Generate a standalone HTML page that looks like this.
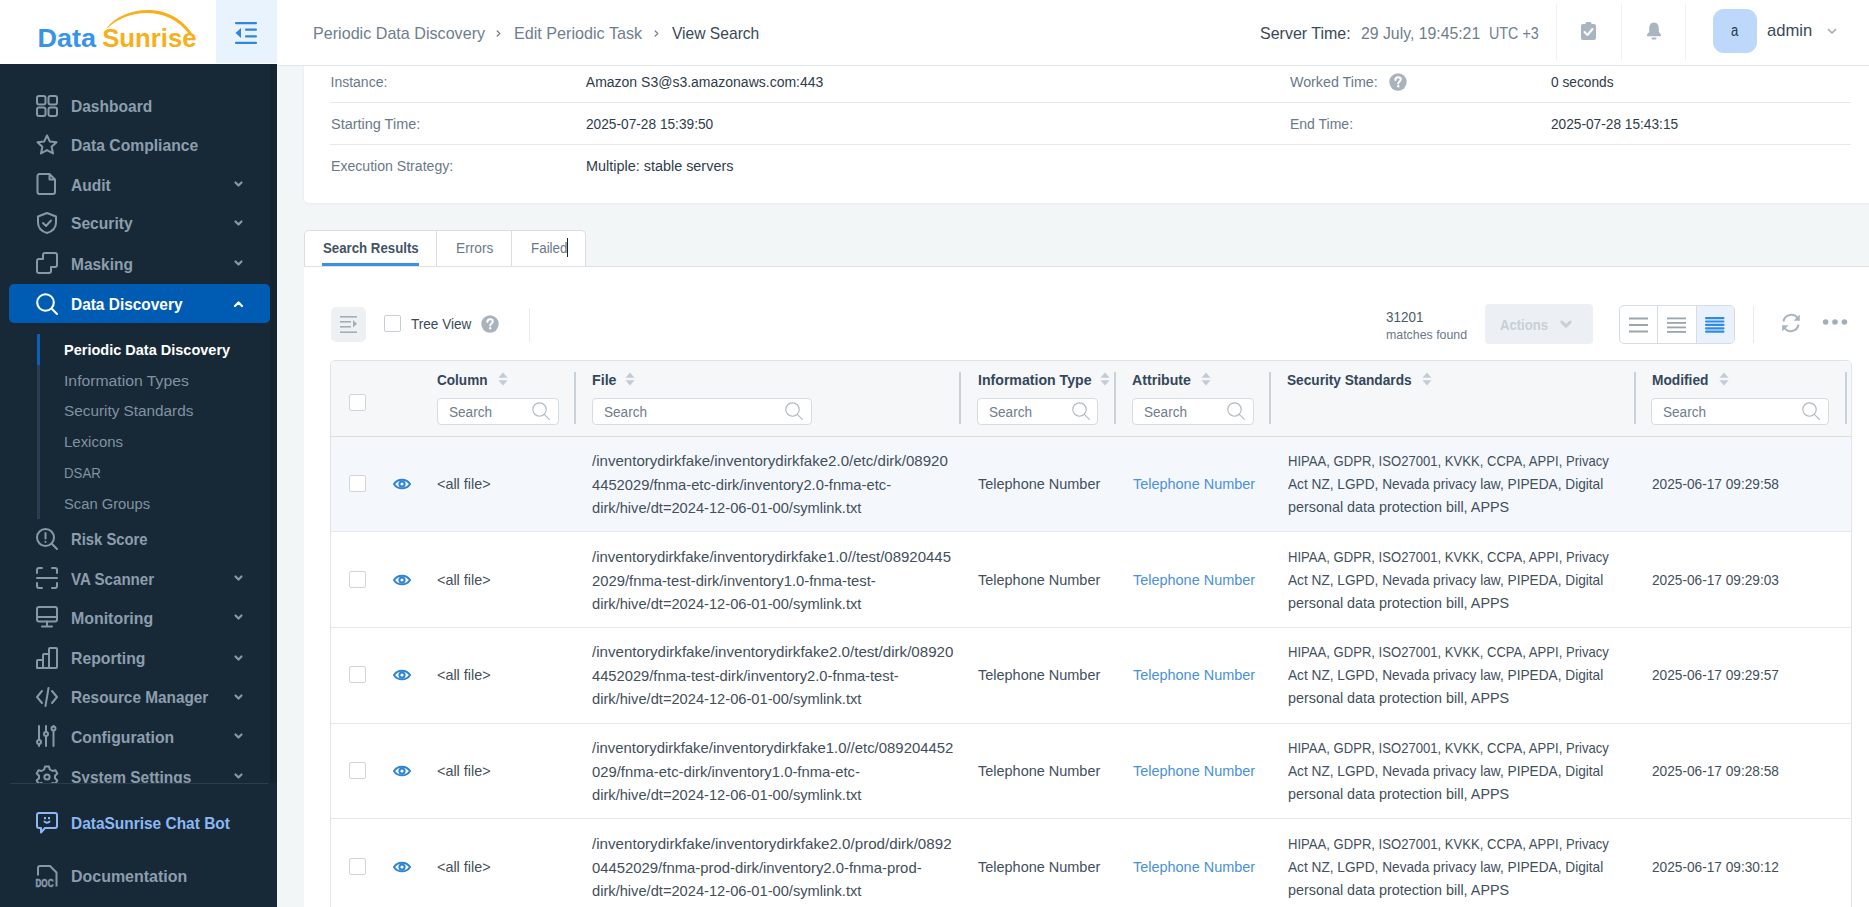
<!DOCTYPE html><html><head><meta charset="utf-8"><style>
html,body{margin:0;padding:0}
body{width:1869px;height:907px;overflow:hidden;position:relative;background:#f3f6f7;font-family:"Liberation Sans",sans-serif}
.t{position:absolute;white-space:nowrap;transform-origin:0 0}
svg{overflow:visible}
</style></head><body>
<div style="position:absolute;left:304px;top:266px;width:1600px;height:700px;background:#fff;"></div>
<div style="position:absolute;left:304px;top:-10px;width:1600px;height:213px;background:#fff;border-radius:5px;box-shadow:0 1px 3px rgba(20,40,60,0.06);"></div>
<div style="position:absolute;left:0px;top:0px;width:277px;height:907px;background:#172937;"></div>
<div style="position:absolute;left:0px;top:0px;width:277px;height:64px;background:#fff;"></div>
<div style="position:absolute;left:216px;top:0px;width:61px;height:63px;background:#e8f3fd;"></div>
<svg style="position:absolute;left:30px;top:6px;" width="175" height="46" viewBox="0 0 175 46"><path d="M77 21.5 C94 0 140 -6 162 27.5 L159.5 28.8 C137 -2 97 4 77.6 21.9 Z" fill="#f7b01b"/><text x="7.6" y="40.6" font-family="Liberation Sans" font-weight="700" font-size="26" fill="#3794e8" textLength="58.5" lengthAdjust="spacingAndGlyphs">Data</text><text x="72.2" y="40.6" font-family="Liberation Sans" font-weight="700" font-size="26" fill="#f7b01b" textLength="94.5" lengthAdjust="spacingAndGlyphs">Sunrise</text></svg>
<svg style="position:absolute;left:234px;top:21px;" width="24" height="24" viewBox="0 0 24 24"><g fill="#2f86dd"><rect x="1" y="1" width="22" height="2.2" rx="1"/><rect x="11" y="7.6" width="12" height="2.2" rx="1"/><rect x="11" y="14.2" width="12" height="2.2" rx="1"/><rect x="1" y="20.8" width="22" height="2.2" rx="1"/><path d="M7 7 L7 17 L1.5 12 Z"/></g></svg>
<div style="position:absolute;left:9px;top:284px;width:261px;height:39px;background:#005cb3;border-radius:5px;"></div>
<svg style="position:absolute;left:36px;top:95px;" width="22" height="22" viewBox="0 0 22 22"><g fill="none" stroke="#8898a6" stroke-width="2" stroke-linecap="round" stroke-linejoin="round"><rect x="1" y="1" width="8.5" height="8.5" rx="2"/><rect x="12.5" y="1" width="8.5" height="8.5" rx="2"/><rect x="1" y="12.5" width="8.5" height="8.5" rx="2"/><rect x="12.5" y="12.5" width="8.5" height="8.5" rx="2"/></g></svg>
<div class="t" style="left:71px;top:98px;font-size:16.5px;line-height:16.5px;font-weight:700;color:#8c9ead;transform:scaleX(0.9422);">Dashboard</div>
<svg style="position:absolute;left:36px;top:134px;" width="22" height="22" viewBox="0 0 22 22"><path fill="none" stroke="#8898a6" stroke-width="2" stroke-linecap="round" stroke-linejoin="round" d="M11 1.5 L13.9 7.6 L20.5 8.3 L15.6 12.8 L17 19.4 L11 16.1 L5 19.4 L6.4 12.8 L1.5 8.3 L8.1 7.6 Z"/></svg>
<div class="t" style="left:71px;top:137.2px;font-size:16.5px;line-height:16.5px;font-weight:700;color:#8c9ead;transform:scaleX(0.9502);">Data Compliance</div>
<svg style="position:absolute;left:36px;top:173px;" width="22" height="22" viewBox="0 0 22 22"><path fill="none" stroke="#8898a6" stroke-width="2" stroke-linecap="round" stroke-linejoin="round" d="M3.5 1 H13.5 L19 6.5 V19 A2 2 0 0 1 17 21 H3.5 A2 2 0 0 1 1.5 19 V3 A2 2 0 0 1 3.5 1 Z M13.5 1 V6.5 H19"/></svg>
<div class="t" style="left:71px;top:176.5px;font-size:16.5px;line-height:16.5px;font-weight:700;color:#8c9ead;transform:scaleX(0.9418);">Audit</div>
<svg style="position:absolute;left:234px;top:181.2px;" width="9" height="6" viewBox="0 0 9 6"><path d="M1.5 1.5 L4.5 4.5 L7.5 1.5" fill="none" stroke="#8898a6" stroke-width="2.2" stroke-linecap="round" stroke-linejoin="round"/></svg>
<svg style="position:absolute;left:36px;top:212px;" width="22" height="22" viewBox="0 0 22 22"><g fill="none" stroke="#8898a6" stroke-width="2" stroke-linecap="round" stroke-linejoin="round"><path d="M11 1 L20 4.5 V10.5 C20 16 16 19.5 11 21 C6 19.5 2 16 2 10.5 V4.5 Z"/><path d="M7 11 L10 14 L15 8.5"/></g></svg>
<div class="t" style="left:71px;top:215.3px;font-size:16.5px;line-height:16.5px;font-weight:700;color:#8c9ead;transform:scaleX(0.9476);">Security</div>
<svg style="position:absolute;left:234px;top:220.0px;" width="9" height="6" viewBox="0 0 9 6"><path d="M1.5 1.5 L4.5 4.5 L7.5 1.5" fill="none" stroke="#8898a6" stroke-width="2.2" stroke-linecap="round" stroke-linejoin="round"/></svg>
<svg style="position:absolute;left:36px;top:252px;" width="22" height="22" viewBox="0 0 22 22"><path fill="none" stroke="#8898a6" stroke-width="2" stroke-linecap="round" stroke-linejoin="round" d="M1 9 A2 2 0 0 1 3 7 H7 V3 A2 2 0 0 1 9 1 H19 A2 2 0 0 1 21 3 V13 A2 2 0 0 1 19 15 H15 V19 A2 2 0 0 1 13 21 H3 A2 2 0 0 1 1 19 Z"/></svg>
<div class="t" style="left:71px;top:255.5px;font-size:16.5px;line-height:16.5px;font-weight:700;color:#8c9ead;transform:scaleX(0.9376);">Masking</div>
<svg style="position:absolute;left:234px;top:260.2px;" width="9" height="6" viewBox="0 0 9 6"><path d="M1.5 1.5 L4.5 4.5 L7.5 1.5" fill="none" stroke="#8898a6" stroke-width="2.2" stroke-linecap="round" stroke-linejoin="round"/></svg>
<svg style="position:absolute;left:36px;top:528px;" width="22" height="22" viewBox="0 0 22 22"><g fill="none" stroke="#8898a6" stroke-width="2" stroke-linecap="round" stroke-linejoin="round"><circle cx="9.5" cy="9.5" r="8.5"/><path d="M15.8 15.8 L21 21"/><path d="M9.5 5 V10.5"/><path d="M9.5 13.8 V14"/></g></svg>
<div class="t" style="left:71px;top:531.1px;font-size:16.5px;line-height:16.5px;font-weight:700;color:#8c9ead;transform:scaleX(0.8981);">Risk Score</div>
<svg style="position:absolute;left:36px;top:567px;" width="22" height="22" viewBox="0 0 22 22"><g fill="none" stroke="#8898a6" stroke-width="2" stroke-linecap="round" stroke-linejoin="round"><path d="M1 6 V3 A2 2 0 0 1 3 1 H6 M16 1 H19 A2 2 0 0 1 21 3 V6 M21 16 V19 A2 2 0 0 1 19 21 H16 M6 21 H3 A2 2 0 0 1 1 19 V16"/><path d="M1 11 H21"/></g></svg>
<div class="t" style="left:71px;top:570.5px;font-size:16.5px;line-height:16.5px;font-weight:700;color:#8c9ead;transform:scaleX(0.9158);">VA Scanner</div>
<svg style="position:absolute;left:234px;top:575.2px;" width="9" height="6" viewBox="0 0 9 6"><path d="M1.5 1.5 L4.5 4.5 L7.5 1.5" fill="none" stroke="#8898a6" stroke-width="2.2" stroke-linecap="round" stroke-linejoin="round"/></svg>
<svg style="position:absolute;left:36px;top:606px;" width="22" height="22" viewBox="0 0 22 22"><g fill="none" stroke="#8898a6" stroke-width="2" stroke-linecap="round" stroke-linejoin="round"><rect x="1" y="1" width="20" height="14.5" rx="2"/><path d="M1 11 H21 M11 15.5 V20.5 M6 20.5 H16"/></g></svg>
<div class="t" style="left:71px;top:609.7px;font-size:16.5px;line-height:16.5px;font-weight:700;color:#8c9ead;transform:scaleX(0.9645);">Monitoring</div>
<svg style="position:absolute;left:234px;top:614.4000000000001px;" width="9" height="6" viewBox="0 0 9 6"><path d="M1.5 1.5 L4.5 4.5 L7.5 1.5" fill="none" stroke="#8898a6" stroke-width="2.2" stroke-linecap="round" stroke-linejoin="round"/></svg>
<svg style="position:absolute;left:36px;top:647px;" width="22" height="22" viewBox="0 0 22 22"><g fill="none" stroke="#8898a6" stroke-width="2" stroke-linecap="round" stroke-linejoin="round"><path d="M1 21 V14 A1 1 0 0 1 2 13 H7 V21 Z M7 21 V8 A1 1 0 0 1 8 7 H13 V21 Z M13 21 V2 A1 1 0 0 1 14 1 H20 A1 1 0 0 1 21 2 V20 A1 1 0 0 1 20 21 Z"/></g></svg>
<div class="t" style="left:71px;top:649.9px;font-size:16.5px;line-height:16.5px;font-weight:700;color:#8c9ead;transform:scaleX(0.9563);">Reporting</div>
<svg style="position:absolute;left:234px;top:654.6px;" width="9" height="6" viewBox="0 0 9 6"><path d="M1.5 1.5 L4.5 4.5 L7.5 1.5" fill="none" stroke="#8898a6" stroke-width="2.2" stroke-linecap="round" stroke-linejoin="round"/></svg>
<svg style="position:absolute;left:36px;top:686px;" width="22" height="22" viewBox="0 0 22 22"><g fill="none" stroke="#8898a6" stroke-width="2" stroke-linecap="round" stroke-linejoin="round"><path d="M6 5 L1 11 L6 17 M16 5 L21 11 L16 17 M12.5 2 L9.5 20"/></g></svg>
<div class="t" style="left:71px;top:688.9px;font-size:16.5px;line-height:16.5px;font-weight:700;color:#8c9ead;transform:scaleX(0.9300);">Resource Manager</div>
<svg style="position:absolute;left:234px;top:693.6px;" width="9" height="6" viewBox="0 0 9 6"><path d="M1.5 1.5 L4.5 4.5 L7.5 1.5" fill="none" stroke="#8898a6" stroke-width="2.2" stroke-linecap="round" stroke-linejoin="round"/></svg>
<svg style="position:absolute;left:36px;top:725px;" width="22" height="22" viewBox="0 0 22 22"><g fill="none" stroke="#8898a6" stroke-width="2" stroke-linecap="round" stroke-linejoin="round"><path d="M3 1 V15 M3 19 V21 M10 1 V7 M10 11 V21 M17.5 1 V1.5 M17.5 5.5 V21"/><circle cx="3" cy="17" r="2"/><circle cx="10" cy="9" r="2"/><circle cx="17.5" cy="3.5" r="2"/></g></svg>
<div class="t" style="left:71px;top:728.7px;font-size:16.5px;line-height:16.5px;font-weight:700;color:#8c9ead;transform:scaleX(0.9543);">Configuration</div>
<svg style="position:absolute;left:234px;top:733.4000000000001px;" width="9" height="6" viewBox="0 0 9 6"><path d="M1.5 1.5 L4.5 4.5 L7.5 1.5" fill="none" stroke="#8898a6" stroke-width="2.2" stroke-linecap="round" stroke-linejoin="round"/></svg>
<svg style="position:absolute;left:36px;top:765px;" width="22" height="22" viewBox="0 0 22 22"><g fill="none" stroke="#8898a6" stroke-width="2" stroke-linecap="round" stroke-linejoin="round"><path d="M9 1.5 H13 L13.8 4.5 L16.5 6 L19.5 5.2 L21.3 8.5 L19 10.8 V13.2 L21.3 15.5 L19.5 18.8 L16.5 18 L13.8 19.5 L13 22.5 H9 L8.2 19.5 L5.5 18 L2.5 18.8 L0.7 15.5 L3 13.2 V10.8 L0.7 8.5 L2.5 5.2 L5.5 6 L8.2 4.5 Z"/><circle cx="11" cy="12" r="2.6"/></g></svg>
<div class="t" style="left:71px;top:768.5px;font-size:16.5px;line-height:16.5px;font-weight:700;color:#8c9ead;transform:scaleX(0.9371);">System Settings</div>
<svg style="position:absolute;left:234px;top:773.2px;" width="9" height="6" viewBox="0 0 9 6"><path d="M1.5 1.5 L4.5 4.5 L7.5 1.5" fill="none" stroke="#8898a6" stroke-width="2.2" stroke-linecap="round" stroke-linejoin="round"/></svg>
<svg style="position:absolute;left:36px;top:293px;" width="22" height="22" viewBox="0 0 22 22"><g fill="none" stroke="#fff" stroke-width="2.1" stroke-linecap="round"><circle cx="9.5" cy="9.5" r="8.3"/><path d="M15.6 15.6 L21 21"/></g></svg>
<div class="t" style="left:71px;top:296px;font-size:16.5px;line-height:16.5px;font-weight:700;color:#fff;transform:scaleX(0.9352);">Data Discovery</div>
<svg style="position:absolute;left:234px;top:300.7px;" width="9" height="6" viewBox="0 0 9 6"><path d="M1 5 L4.5 1.5 L8 5" fill="none" stroke="#fff" stroke-width="2.2" stroke-linecap="round" stroke-linejoin="round"/></svg>
<div style="position:absolute;left:37px;top:334px;width:2.5px;height:185px;background:#2a3d52;"></div>
<div style="position:absolute;left:37px;top:334px;width:2.5px;height:31px;background:#0a60bb;"></div>
<div class="t" style="left:64.2px;top:342px;font-size:15.5px;line-height:15.5px;font-weight:700;color:#ffffff;transform:scaleX(0.9359);">Periodic Data Discovery</div>
<div class="t" style="left:64.2px;top:373.4px;font-size:15.5px;line-height:15.5px;font-weight:400;color:#8192a1;transform:scaleX(1.0154);">Information Types</div>
<div class="t" style="left:64.2px;top:403.2px;font-size:15.5px;line-height:15.5px;font-weight:400;color:#8192a1;transform:scaleX(0.9881);">Security Standards</div>
<div class="t" style="left:64.2px;top:434px;font-size:15.5px;line-height:15.5px;font-weight:400;color:#8192a1;transform:scaleX(0.9644);">Lexicons</div>
<div class="t" style="left:64.2px;top:464.8px;font-size:15.5px;line-height:15.5px;font-weight:400;color:#8192a1;transform:scaleX(0.8545);">DSAR</div>
<div class="t" style="left:64.2px;top:495.6px;font-size:15.5px;line-height:15.5px;font-weight:400;color:#8192a1;transform:scaleX(0.9506);">Scan Groups</div>
<div style="position:absolute;left:0px;top:783px;width:277px;height:124px;background:#172937;"></div>
<div style="position:absolute;left:10px;top:783px;width:258px;height:1px;background:#2d3d4e;"></div>
<svg style="position:absolute;left:36px;top:812px;" width="22" height="22" viewBox="0 0 22 22"><g fill="none" stroke="#8cb7f4" stroke-width="2" stroke-linejoin="round" stroke-linecap="round"><path d="M3 1 H19 A2 2 0 0 1 21 3 V14 A2 2 0 0 1 19 16 H9 L5 20.5 V16 H3 A2 2 0 0 1 1 14 V3 A2 2 0 0 1 3 1 Z"/><path d="M8.5 9.5 C9.5 11 12.5 11 13.5 9.5"/></g><g fill="#8cb7f4"><rect x="8" y="5" width="2" height="2.2"/><rect x="12" y="5" width="2" height="2.2"/></g></svg>
<div class="t" style="left:71px;top:814.9px;font-size:16.5px;line-height:16.5px;font-weight:700;color:#8cb7f4;transform:scaleX(0.9369);">DataSunrise Chat Bot</div>
<svg style="position:absolute;left:36px;top:865px;" width="22" height="22" viewBox="0 0 22 22"><path fill="none" stroke="#8898a6" stroke-width="2" stroke-linejoin="round" d="M2 10.5 V3 A2 2 0 0 1 4 1 H14 L20.5 7.5 V21.5"/><text x="-0.5" y="21.5" font-family="Liberation Sans" font-weight="700" font-size="10" fill="#8898a6" stroke="#8898a6" stroke-width="0.5" textLength="18" lengthAdjust="spacingAndGlyphs">DOC</text></svg>
<div class="t" style="left:71px;top:867.9px;font-size:16.5px;line-height:16.5px;font-weight:700;color:#8c9ead;transform:scaleX(0.9677);">Documentation</div>
<div style="position:absolute;left:270px;top:64px;width:7px;height:719px;background:#15252f;"></div>
<div style="position:absolute;left:277px;top:0px;width:1592px;height:65px;background:#fff;"></div>
<div style="position:absolute;left:277px;top:65px;width:1592px;height:1px;background:#e2e6ea;"></div>
<div class="t" style="left:312.8px;top:25px;font-size:17px;line-height:17px;font-weight:400;color:#6f7e8d;transform:scaleX(0.9487);">Periodic Data Discovery</div>
<svg style="position:absolute;left:496px;top:30px;" width="5" height="7" viewBox="0 0 5 7"><path d="M1.2 1 L3.8 3.5 L1.2 6" fill="none" stroke="#6f7e8d" stroke-width="1.2" stroke-linecap="round"/></svg>
<div class="t" style="left:514.4px;top:25px;font-size:17px;line-height:17px;font-weight:400;color:#6f7e8d;transform:scaleX(0.9503);">Edit Periodic Task</div>
<svg style="position:absolute;left:654px;top:30px;" width="5" height="7" viewBox="0 0 5 7"><path d="M1.2 1 L3.8 3.5 L1.2 6" fill="none" stroke="#6f7e8d" stroke-width="1.2" stroke-linecap="round"/></svg>
<div class="t" style="left:672.4px;top:25px;font-size:17px;line-height:17px;font-weight:400;color:#3a4958;transform:scaleX(0.9177);">View Search</div>
<div class="t" style="left:1260px;top:25px;font-size:17px;line-height:17px;font-weight:400;color:#3a4958;transform:scaleX(0.9414);">Server Time:</div>
<div class="t" style="left:1361px;top:25px;font-size:17px;line-height:17px;font-weight:400;color:#6f7e8d;transform:scaleX(0.9296);">29 July, 19:45:21</div>
<div class="t" style="left:1488.5px;top:25px;font-size:17px;line-height:17px;font-weight:400;color:#6f7e8d;transform:scaleX(0.8418);">UTC +3</div>
<div style="position:absolute;left:1556px;top:4px;width:1px;height:56px;background:#eef0f3;"></div>
<div style="position:absolute;left:1621px;top:4px;width:1px;height:56px;background:#eef0f3;"></div>
<div style="position:absolute;left:1685px;top:4px;width:1px;height:56px;background:#eef0f3;"></div>
<svg style="position:absolute;left:1581px;top:22px;" width="15" height="18" viewBox="0 0 15 18"><rect x="0" y="2" width="15" height="16" rx="2" fill="#a9b6c2"/><rect x="4.5" y="0" width="6" height="4" rx="1.5" fill="#a9b6c2"/><path d="M3.5 10 L6.5 13 L11.5 7" fill="none" stroke="#fff" stroke-width="2" stroke-linecap="round" stroke-linejoin="round"/></svg>
<svg style="position:absolute;left:1646px;top:22px;" width="16" height="18" viewBox="0 0 16 18"><path d="M8 0.5 C4.5 0.5 3.2 3.5 3.2 6.5 V10 L1 12.5 A1.3 1.3 0 0 0 2 14.3 H14 A1.3 1.3 0 0 0 15 12.5 L12.8 10 V6.5 C12.8 3.5 11.5 0.5 8 0.5 Z" fill="#a9b6c2"/><rect x="5.5" y="15.6" width="5" height="2" rx="1" fill="#a9b6c2"/></svg>
<div style="position:absolute;left:1713px;top:9px;width:44px;height:44px;background:#bdd8fb;border-radius:11px;"></div>
<div class="t" style="left:1731px;top:22.799999999999997px;font-size:16px;line-height:16px;font-weight:400;color:#25364a;transform:scaleX(0.8204);">a</div>
<div class="t" style="left:1766.7px;top:21.799999999999997px;font-size:17px;line-height:17px;font-weight:400;color:#3a4958;transform:scaleX(0.9784);">admin</div>
<svg style="position:absolute;left:1827px;top:28px;" width="10" height="7" viewBox="0 0 10 7"><path d="M1.5 1.5 L5 5 L8.5 1.5" fill="none" stroke="#a3abb3" stroke-width="1.7" stroke-linecap="round" stroke-linejoin="round"/></svg>
<div style="position:absolute;left:330px;top:102px;width:1521px;height:1px;background:#e6e9ec;"></div>
<div style="position:absolute;left:330px;top:144px;width:1521px;height:1px;background:#e6e9ec;"></div>
<div class="t" style="left:330.5px;top:75px;font-size:14px;line-height:14px;font-weight:400;color:#6a7988;">Instance:</div>
<div class="t" style="left:585.8px;top:75px;font-size:14px;line-height:14px;font-weight:400;color:#2e3c4a;">Amazon S3@s3.amazonaws.com:443</div>
<div class="t" style="left:330.5px;top:117.19999999999999px;font-size:14px;line-height:14px;font-weight:400;color:#6a7988;transform:scaleX(1.0333);">Starting Time:</div>
<div class="t" style="left:586px;top:117.1px;font-size:14px;line-height:14px;font-weight:400;color:#2e3c4a;transform:scaleX(0.9785);">2025-07-28 15:39:50</div>
<div class="t" style="left:330.5px;top:159px;font-size:14px;line-height:14px;font-weight:400;color:#6a7988;transform:scaleX(1.0066);">Execution Strategy:</div>
<div class="t" style="left:586px;top:158.9px;font-size:14px;line-height:14px;font-weight:400;color:#2e3c4a;transform:scaleX(1.0296);">Multiple: stable servers</div>
<div class="t" style="left:1289.8px;top:74.8px;font-size:14px;line-height:14px;font-weight:400;color:#6a7988;transform:scaleX(1.0179);">Worked Time:</div>
<svg style="position:absolute;left:1389px;top:73px;" width="18" height="18" viewBox="0 0 18 18"><circle cx="9" cy="9" r="8.7" fill="#a9b3bd"/><path d="M6.4 7 C6.4 5.2 7.6 4.3 9.1 4.3 C10.7 4.3 11.8 5.3 11.8 6.6 C11.8 8.4 9.2 8.6 9.2 10.6" fill="none" stroke="#fff" stroke-width="2" stroke-linecap="round"/><circle cx="9.2" cy="13.3" r="1.2" fill="#fff"/></svg>
<div class="t" style="left:1550.8px;top:75px;font-size:14px;line-height:14px;font-weight:400;color:#2e3c4a;transform:scaleX(0.9809);">0 seconds</div>
<div class="t" style="left:1290px;top:117px;font-size:14px;line-height:14px;font-weight:400;color:#6a7988;">End Time:</div>
<div class="t" style="left:1550.8px;top:116.9px;font-size:14px;line-height:14px;font-weight:400;color:#2e3c4a;transform:scaleX(0.9777);">2025-07-28 15:43:15</div>
<div style="position:absolute;left:304px;top:230px;width:281px;height:36px;background:#fff;border:1px solid #d9dee3;border-bottom:none;border-radius:5px 5px 0 0;box-sizing:border-box;width:282px;height:36px"></div>
<div style="position:absolute;left:436px;top:230px;width:1px;height:36px;background:#d9dee3;"></div>
<div style="position:absolute;left:511px;top:230px;width:1px;height:36px;background:#d9dee3;"></div>
<div class="t" style="left:322.8px;top:240.9px;font-size:14px;line-height:14px;font-weight:700;color:#435363;transform:scaleX(0.9460);">Search Results</div>
<div style="position:absolute;left:322px;top:263px;width:97px;height:3px;background:#3b8fe3;"></div>
<div class="t" style="left:455.8px;top:240.9px;font-size:14px;line-height:14px;font-weight:400;color:#6a7988;transform:scaleX(0.9814);">Errors</div>
<div class="t" style="left:530.6px;top:240.9px;font-size:14px;line-height:14px;font-weight:400;color:#6a7988;transform:scaleX(0.9572);">Failed</div>
<div style="position:absolute;left:567px;top:238px;width:1px;height:19px;background:#222;"></div>
<div style="position:absolute;left:304px;top:266px;width:1565px;height:1px;background:#dce1e6;"></div>
<div style="position:absolute;left:331px;top:307px;width:35px;height:35px;background:#eef1f4;border-radius:5px;"></div>
<svg style="position:absolute;left:340px;top:316px;" width="18" height="17" viewBox="0 0 18 17"><g fill="#a3aeb8"><rect x="0" y="0" width="17" height="1.6"/><rect x="0" y="5" width="11" height="1.6"/><rect x="0" y="10" width="11" height="1.6"/><rect x="0" y="15.4" width="17" height="1.6"/><path d="M13 4 L17 7.8 L13 11.6 Z"/></g></svg>
<div style="position:absolute;left:384px;top:315px;width:17px;height:17px;background:#fff;border:1px solid #c9ced4;border-radius:2px;box-sizing:border-box;"></div>
<div class="t" style="left:411.2px;top:317px;font-size:14px;line-height:14px;font-weight:400;color:#3a4958;transform:scaleX(0.9687);">Tree View</div>
<svg style="position:absolute;left:481px;top:315px;" width="18" height="18" viewBox="0 0 18 18"><circle cx="9" cy="9" r="8.7" fill="#a9b3bd"/><path d="M6.4 7 C6.4 5.2 7.6 4.3 9.1 4.3 C10.7 4.3 11.8 5.3 11.8 6.6 C11.8 8.4 9.2 8.6 9.2 10.6" fill="none" stroke="#fff" stroke-width="2" stroke-linecap="round"/><circle cx="9.2" cy="13.3" r="1.2" fill="#fff"/></svg>
<div style="position:absolute;left:529px;top:308px;width:1px;height:34px;background:#e9ecef;"></div>
<div class="t" style="left:1385.5px;top:310.2px;font-size:14px;line-height:14px;font-weight:400;color:#4c5a68;transform:scaleX(0.9607);">31201</div>
<div class="t" style="left:1385.5px;top:328px;font-size:13px;line-height:13px;font-weight:400;color:#6a7988;transform:scaleX(0.9510);">matches found</div>
<div style="position:absolute;left:1485px;top:304px;width:108px;height:40px;background:#ecf0f4;border-radius:4px;"></div>
<div class="t" style="left:1499.5px;top:318px;font-size:14.5px;line-height:14.5px;font-weight:700;color:#c8cfd6;transform:scaleX(0.9027);">Actions</div>
<svg style="position:absolute;left:1560px;top:320px;" width="12" height="9" viewBox="0 0 12 9"><path d="M1.8 2 L6 6.2 L10.2 2" fill="none" stroke="#c8cfd6" stroke-width="3" stroke-linecap="round" stroke-linejoin="round"/></svg>
<div style="position:absolute;left:1619px;top:305px;width:116px;height:39px;box-sizing:border-box;border:1px solid #d6dce2;border-radius:5px;background:#fff;overflow:hidden"><div style="position:absolute;left:77px;top:0;width:39px;height:39px;background:#e9f2fc"></div></div>
<div style="position:absolute;left:1657px;top:306px;width:1px;height:37px;background:#d6dce2;"></div>
<div style="position:absolute;left:1696px;top:306px;width:1px;height:37px;background:#d6dce2;"></div>
<svg style="position:absolute;left:1629px;top:317px;" width="20" height="16" viewBox="0 0 20 16"><g fill="#9aa6b1"><rect x="0" y="0.5" width="19" height="2"/><rect x="0" y="7" width="19" height="2"/><rect x="0" y="13.5" width="19" height="2"/></g></svg>
<svg style="position:absolute;left:1667px;top:317px;" width="20" height="16" viewBox="0 0 20 16"><g fill="#9aa6b1"><rect x="0" y="0.5" width="19" height="1.8"/><rect x="0" y="5" width="19" height="1.8"/><rect x="0" y="9.5" width="19" height="1.8"/><rect x="0" y="14" width="19" height="1.8"/></g></svg>
<svg style="position:absolute;left:1705px;top:317px;" width="20" height="16" viewBox="0 0 20 16"><g fill="#2e8ae6"><rect x="0" y="0" width="19.5" height="2.2" rx="1"/><rect x="0" y="3.4" width="19.5" height="2.2" rx="1"/><rect x="0" y="6.8" width="19.5" height="2.2" rx="1"/><rect x="0" y="10.2" width="19.5" height="2.2" rx="1"/><rect x="0" y="13.6" width="19.5" height="2.2" rx="1"/></g></svg>
<div style="position:absolute;left:1753px;top:306px;width:1px;height:37px;background:#e9ecef;"></div>
<svg style="position:absolute;left:1782px;top:314px;" width="18" height="18" viewBox="0 0 18 18"><g fill="none" stroke="#a9b5bd" stroke-width="2" stroke-linecap="butt"><path d="M1.5 7.5 A7.8 7.8 0 0 1 15.8 4.5"/><path d="M16.5 10.5 A7.8 7.8 0 0 1 2.2 13.5"/></g><g fill="#a9b5bd"><path d="M17.8 0.5 V6.8 H11.5 Z"/><path d="M0.2 17.5 V11.2 H6.5 Z"/></g></svg>
<svg style="position:absolute;left:1822px;top:319px;" width="26" height="6" viewBox="0 0 26 6"><g fill="#a2afbb"><circle cx="3.6" cy="3" r="2.8"/><circle cx="13" cy="3" r="2.8"/><circle cx="22.4" cy="3" r="2.8"/></g></svg>
<div style="position:absolute;left:330px;top:360px;width:1522px;height:600px;box-sizing:border-box;border:1px solid #dfe4e9;border-radius:5px;background:#fff;overflow:hidden"><div style="position:absolute;left:0;top:0;width:100%;height:75px;background:#f5f7f9;border-bottom:1px solid #d8dde2"></div><div style="position:absolute;left:0;top:76px;width:100%;height:94px;background:#f4f8fd"></div></div>
<div style="position:absolute;left:349px;top:394px;width:17px;height:17px;background:#fff;border:1px solid #d1d6dc;border-radius:2px;box-sizing:border-box;"></div>
<div class="t" style="left:436.9px;top:373px;font-size:14px;line-height:14px;font-weight:700;color:#34475a;transform:scaleX(0.9692);">Column</div>
<svg style="position:absolute;left:498px;top:372px;" width="10" height="14" viewBox="0 0 10 14"><g fill="#c3ccd5"><path d="M5 0.5 L9.5 5.8 H0.5 Z"/><path d="M5 13.5 L9.5 8.2 H0.5 Z"/></g></svg>
<div style="position:absolute;left:437px;top:398px;width:121.5px;height:27px;background:#fff;border:1px solid #d6dce2;border-radius:4px;box-sizing:border-box;"></div>
<div class="t" style="left:448.6px;top:404.8px;font-size:14px;line-height:14px;font-weight:400;color:#6f7d8b;transform:scaleX(0.9694);">Search</div>
<svg style="position:absolute;left:532.0px;top:402px;" width="18" height="18" viewBox="0 0 18 18"><g fill="none" stroke="#b3b9bf" stroke-width="1.15"><circle cx="7.5" cy="7.5" r="6.7"/><path d="M12.3 12.3 L17.3 17.3" stroke-linecap="round"/></g></svg>
<div style="position:absolute;left:574px;top:372px;width:2px;height:52px;background:#c9d1d9;"></div>
<div class="t" style="left:592px;top:373px;font-size:14px;line-height:14px;font-weight:700;color:#34475a;transform:scaleX(1.0159);">File</div>
<svg style="position:absolute;left:625px;top:372px;" width="10" height="14" viewBox="0 0 10 14"><g fill="#c3ccd5"><path d="M5 0.5 L9.5 5.8 H0.5 Z"/><path d="M5 13.5 L9.5 8.2 H0.5 Z"/></g></svg>
<div style="position:absolute;left:592px;top:398px;width:219.5px;height:27px;background:#fff;border:1px solid #d6dce2;border-radius:4px;box-sizing:border-box;"></div>
<div class="t" style="left:603.6px;top:404.8px;font-size:14px;line-height:14px;font-weight:400;color:#6f7d8b;transform:scaleX(0.9694);">Search</div>
<svg style="position:absolute;left:785.0px;top:402px;" width="18" height="18" viewBox="0 0 18 18"><g fill="none" stroke="#b3b9bf" stroke-width="1.15"><circle cx="7.5" cy="7.5" r="6.7"/><path d="M12.3 12.3 L17.3 17.3" stroke-linecap="round"/></g></svg>
<div style="position:absolute;left:959px;top:372px;width:2px;height:52px;background:#c9d1d9;"></div>
<div class="t" style="left:977.5px;top:373px;font-size:14px;line-height:14px;font-weight:700;color:#34475a;transform:scaleX(1.0087);">Information Type</div>
<svg style="position:absolute;left:1100px;top:372px;" width="10" height="14" viewBox="0 0 10 14"><g fill="#c3ccd5"><path d="M5 0.5 L9.5 5.8 H0.5 Z"/><path d="M5 13.5 L9.5 8.2 H0.5 Z"/></g></svg>
<div style="position:absolute;left:977px;top:398px;width:121px;height:27px;background:#fff;border:1px solid #d6dce2;border-radius:4px;box-sizing:border-box;"></div>
<div class="t" style="left:988.6px;top:404.8px;font-size:14px;line-height:14px;font-weight:400;color:#6f7d8b;transform:scaleX(0.9694);">Search</div>
<svg style="position:absolute;left:1071.5px;top:402px;" width="18" height="18" viewBox="0 0 18 18"><g fill="none" stroke="#b3b9bf" stroke-width="1.15"><circle cx="7.5" cy="7.5" r="6.7"/><path d="M12.3 12.3 L17.3 17.3" stroke-linecap="round"/></g></svg>
<div style="position:absolute;left:1114px;top:372px;width:2px;height:52px;background:#c9d1d9;"></div>
<div class="t" style="left:1132.1px;top:373px;font-size:14px;line-height:14px;font-weight:700;color:#34475a;transform:scaleX(1.0099);">Attribute</div>
<svg style="position:absolute;left:1201px;top:372px;" width="10" height="14" viewBox="0 0 10 14"><g fill="#c3ccd5"><path d="M5 0.5 L9.5 5.8 H0.5 Z"/><path d="M5 13.5 L9.5 8.2 H0.5 Z"/></g></svg>
<div style="position:absolute;left:1132px;top:398px;width:121.5px;height:27px;background:#fff;border:1px solid #d6dce2;border-radius:4px;box-sizing:border-box;"></div>
<div class="t" style="left:1143.6px;top:404.8px;font-size:14px;line-height:14px;font-weight:400;color:#6f7d8b;transform:scaleX(0.9694);">Search</div>
<svg style="position:absolute;left:1227.0px;top:402px;" width="18" height="18" viewBox="0 0 18 18"><g fill="none" stroke="#b3b9bf" stroke-width="1.15"><circle cx="7.5" cy="7.5" r="6.7"/><path d="M12.3 12.3 L17.3 17.3" stroke-linecap="round"/></g></svg>
<div style="position:absolute;left:1269px;top:372px;width:2px;height:52px;background:#c9d1d9;"></div>
<div class="t" style="left:1287px;top:373px;font-size:14px;line-height:14px;font-weight:700;color:#34475a;transform:scaleX(0.9765);">Security Standards</div>
<svg style="position:absolute;left:1422px;top:372px;" width="10" height="14" viewBox="0 0 10 14"><g fill="#c3ccd5"><path d="M5 0.5 L9.5 5.8 H0.5 Z"/><path d="M5 13.5 L9.5 8.2 H0.5 Z"/></g></svg>
<div class="t" style="left:1651.8px;top:373px;font-size:14px;line-height:14px;font-weight:700;color:#34475a;transform:scaleX(0.9801);">Modified</div>
<svg style="position:absolute;left:1719px;top:372px;" width="10" height="14" viewBox="0 0 10 14"><g fill="#c3ccd5"><path d="M5 0.5 L9.5 5.8 H0.5 Z"/><path d="M5 13.5 L9.5 8.2 H0.5 Z"/></g></svg>
<div style="position:absolute;left:1651px;top:398px;width:177.5999999999999px;height:27px;background:#fff;border:1px solid #d6dce2;border-radius:4px;box-sizing:border-box;"></div>
<div class="t" style="left:1662.6px;top:404.8px;font-size:14px;line-height:14px;font-weight:400;color:#6f7d8b;transform:scaleX(0.9694);">Search</div>
<svg style="position:absolute;left:1802.1px;top:402px;" width="18" height="18" viewBox="0 0 18 18"><g fill="none" stroke="#b3b9bf" stroke-width="1.15"><circle cx="7.5" cy="7.5" r="6.7"/><path d="M12.3 12.3 L17.3 17.3" stroke-linecap="round"/></g></svg>
<div style="position:absolute;left:1634px;top:372px;width:2px;height:52px;background:#c9d1d9;"></div>
<div style="position:absolute;left:1845px;top:372px;width:2px;height:52px;background:#c9d1d9;"></div>
<div style="position:absolute;left:349px;top:475px;width:17px;height:17px;background:#fff;border:1px solid #d1d6dc;border-radius:2px;box-sizing:border-box;"></div>
<svg style="position:absolute;left:393px;top:477px;" width="18" height="14" viewBox="0 0 18 14"><g fill="none" stroke="#2e83d4" stroke-width="2"><path d="M1 7 C4.5 1.2 13.5 1.2 17 7 C13.5 12.8 4.5 12.8 1 7 Z"/><circle cx="9" cy="7" r="2.6"/></g></svg>
<div class="t" style="left:436.8px;top:477.3px;font-size:14.2px;line-height:14.2px;font-weight:400;color:#434f5b;transform:scaleX(1.0153);">&lt;all file&gt;</div>
<div class="t" style="left:592.1px;top:454.3px;font-size:14.2px;line-height:14.2px;font-weight:400;color:#434f5b;transform:scaleX(1.0618);">/inventorydirkfake/inventorydirkfake2.0/etc/dirk/08920</div>
<div class="t" style="left:1287.5px;top:453.7px;font-size:14.2px;line-height:14.2px;font-weight:400;color:#434f5b;transform:scaleX(0.9219);">HIPAA, GDPR, ISO27001, KVKK, CCPA, APPI, Privacy</div>
<div class="t" style="left:592.1px;top:477.6px;font-size:14.2px;line-height:14.2px;font-weight:400;color:#434f5b;transform:scaleX(1.0390);">4452029/fnma-etc-dirk/inventory2.0-fnma-etc-</div>
<div class="t" style="left:1287.5px;top:477.0px;font-size:14.2px;line-height:14.2px;font-weight:400;color:#434f5b;transform:scaleX(0.9634);">Act NZ, LGPD, Nevada privacy law, PIPEDA, Digital</div>
<div class="t" style="left:592.1px;top:500.9px;font-size:14.2px;line-height:14.2px;font-weight:400;color:#434f5b;transform:scaleX(1.0335);">dirk/hive/dt=2024-12-06-01-00/symlink.txt</div>
<div class="t" style="left:1287.5px;top:500.29999999999995px;font-size:14.2px;line-height:14.2px;font-weight:400;color:#434f5b;transform:scaleX(1.0121);">personal data protection bill, APPS</div>
<div class="t" style="left:977.6px;top:477.1px;font-size:14.2px;line-height:14.2px;font-weight:400;color:#434f5b;transform:scaleX(1.0201);">Telephone Number</div>
<div class="t" style="left:1132.8px;top:477.1px;font-size:14.2px;line-height:14.2px;font-weight:400;color:#4a90da;transform:scaleX(1.0185);">Telephone Number</div>
<div class="t" style="left:1651.6px;top:477.1px;font-size:14.2px;line-height:14.2px;font-weight:400;color:#434f5b;transform:scaleX(0.9632);">2025-06-17 09:29:58</div>
<div style="position:absolute;left:331px;top:531px;width:1520px;height:1px;background:#e6e9ec;"></div>
<div style="position:absolute;left:349px;top:571px;width:17px;height:17px;background:#fff;border:1px solid #d1d6dc;border-radius:2px;box-sizing:border-box;"></div>
<svg style="position:absolute;left:393px;top:573px;" width="18" height="14" viewBox="0 0 18 14"><g fill="none" stroke="#2e83d4" stroke-width="2"><path d="M1 7 C4.5 1.2 13.5 1.2 17 7 C13.5 12.8 4.5 12.8 1 7 Z"/><circle cx="9" cy="7" r="2.6"/></g></svg>
<div class="t" style="left:436.8px;top:573.3px;font-size:14.2px;line-height:14.2px;font-weight:400;color:#434f5b;transform:scaleX(1.0153);">&lt;all file&gt;</div>
<div class="t" style="left:592.1px;top:550.3px;font-size:14.2px;line-height:14.2px;font-weight:400;color:#434f5b;transform:scaleX(1.0561);">/inventorydirkfake/inventorydirkfake1.0//test/08920445</div>
<div class="t" style="left:1287.5px;top:549.7px;font-size:14.2px;line-height:14.2px;font-weight:400;color:#434f5b;transform:scaleX(0.9219);">HIPAA, GDPR, ISO27001, KVKK, CCPA, APPI, Privacy</div>
<div class="t" style="left:592.1px;top:573.5999999999999px;font-size:14.2px;line-height:14.2px;font-weight:400;color:#434f5b;transform:scaleX(1.0431);">2029/fnma-test-dirk/inventory1.0-fnma-test-</div>
<div class="t" style="left:1287.5px;top:573.0px;font-size:14.2px;line-height:14.2px;font-weight:400;color:#434f5b;transform:scaleX(0.9634);">Act NZ, LGPD, Nevada privacy law, PIPEDA, Digital</div>
<div class="t" style="left:592.1px;top:596.9px;font-size:14.2px;line-height:14.2px;font-weight:400;color:#434f5b;transform:scaleX(1.0335);">dirk/hive/dt=2024-12-06-01-00/symlink.txt</div>
<div class="t" style="left:1287.5px;top:596.3000000000001px;font-size:14.2px;line-height:14.2px;font-weight:400;color:#434f5b;transform:scaleX(1.0121);">personal data protection bill, APPS</div>
<div class="t" style="left:977.6px;top:573.1px;font-size:14.2px;line-height:14.2px;font-weight:400;color:#434f5b;transform:scaleX(1.0201);">Telephone Number</div>
<div class="t" style="left:1132.8px;top:573.1px;font-size:14.2px;line-height:14.2px;font-weight:400;color:#4a90da;transform:scaleX(1.0185);">Telephone Number</div>
<div class="t" style="left:1651.6px;top:573.1px;font-size:14.2px;line-height:14.2px;font-weight:400;color:#434f5b;transform:scaleX(0.9632);">2025-06-17 09:29:03</div>
<div style="position:absolute;left:331px;top:627px;width:1520px;height:1px;background:#e6e9ec;"></div>
<div style="position:absolute;left:349px;top:666px;width:17px;height:17px;background:#fff;border:1px solid #d1d6dc;border-radius:2px;box-sizing:border-box;"></div>
<svg style="position:absolute;left:393px;top:668px;" width="18" height="14" viewBox="0 0 18 14"><g fill="none" stroke="#2e83d4" stroke-width="2"><path d="M1 7 C4.5 1.2 13.5 1.2 17 7 C13.5 12.8 4.5 12.8 1 7 Z"/><circle cx="9" cy="7" r="2.6"/></g></svg>
<div class="t" style="left:436.8px;top:668.3px;font-size:14.2px;line-height:14.2px;font-weight:400;color:#434f5b;transform:scaleX(1.0153);">&lt;all file&gt;</div>
<div class="t" style="left:592.1px;top:645.3px;font-size:14.2px;line-height:14.2px;font-weight:400;color:#434f5b;transform:scaleX(1.0657);">/inventorydirkfake/inventorydirkfake2.0/test/dirk/08920</div>
<div class="t" style="left:1287.5px;top:644.7px;font-size:14.2px;line-height:14.2px;font-weight:400;color:#434f5b;transform:scaleX(0.9219);">HIPAA, GDPR, ISO27001, KVKK, CCPA, APPI, Privacy</div>
<div class="t" style="left:592.1px;top:668.5999999999999px;font-size:14.2px;line-height:14.2px;font-weight:400;color:#434f5b;transform:scaleX(1.0369);">4452029/fnma-test-dirk/inventory2.0-fnma-test-</div>
<div class="t" style="left:1287.5px;top:668.0px;font-size:14.2px;line-height:14.2px;font-weight:400;color:#434f5b;transform:scaleX(0.9634);">Act NZ, LGPD, Nevada privacy law, PIPEDA, Digital</div>
<div class="t" style="left:592.1px;top:691.9px;font-size:14.2px;line-height:14.2px;font-weight:400;color:#434f5b;transform:scaleX(1.0335);">dirk/hive/dt=2024-12-06-01-00/symlink.txt</div>
<div class="t" style="left:1287.5px;top:691.3000000000001px;font-size:14.2px;line-height:14.2px;font-weight:400;color:#434f5b;transform:scaleX(1.0121);">personal data protection bill, APPS</div>
<div class="t" style="left:977.6px;top:668.1px;font-size:14.2px;line-height:14.2px;font-weight:400;color:#434f5b;transform:scaleX(1.0201);">Telephone Number</div>
<div class="t" style="left:1132.8px;top:668.1px;font-size:14.2px;line-height:14.2px;font-weight:400;color:#4a90da;transform:scaleX(1.0185);">Telephone Number</div>
<div class="t" style="left:1651.6px;top:668.1px;font-size:14.2px;line-height:14.2px;font-weight:400;color:#434f5b;transform:scaleX(0.9632);">2025-06-17 09:29:57</div>
<div style="position:absolute;left:331px;top:723px;width:1520px;height:1px;background:#e6e9ec;"></div>
<div style="position:absolute;left:349px;top:762px;width:17px;height:17px;background:#fff;border:1px solid #d1d6dc;border-radius:2px;box-sizing:border-box;"></div>
<svg style="position:absolute;left:393px;top:764px;" width="18" height="14" viewBox="0 0 18 14"><g fill="none" stroke="#2e83d4" stroke-width="2"><path d="M1 7 C4.5 1.2 13.5 1.2 17 7 C13.5 12.8 4.5 12.8 1 7 Z"/><circle cx="9" cy="7" r="2.6"/></g></svg>
<div class="t" style="left:436.8px;top:764.3px;font-size:14.2px;line-height:14.2px;font-weight:400;color:#434f5b;transform:scaleX(1.0153);">&lt;all file&gt;</div>
<div class="t" style="left:592.1px;top:741.3px;font-size:14.2px;line-height:14.2px;font-weight:400;color:#434f5b;transform:scaleX(1.0510);">/inventorydirkfake/inventorydirkfake1.0//etc/089204452</div>
<div class="t" style="left:1287.5px;top:740.7px;font-size:14.2px;line-height:14.2px;font-weight:400;color:#434f5b;transform:scaleX(0.9219);">HIPAA, GDPR, ISO27001, KVKK, CCPA, APPI, Privacy</div>
<div class="t" style="left:592.1px;top:764.5999999999999px;font-size:14.2px;line-height:14.2px;font-weight:400;color:#434f5b;transform:scaleX(1.0457);">029/fnma-etc-dirk/inventory1.0-fnma-etc-</div>
<div class="t" style="left:1287.5px;top:764.0px;font-size:14.2px;line-height:14.2px;font-weight:400;color:#434f5b;transform:scaleX(0.9634);">Act NZ, LGPD, Nevada privacy law, PIPEDA, Digital</div>
<div class="t" style="left:592.1px;top:787.9px;font-size:14.2px;line-height:14.2px;font-weight:400;color:#434f5b;transform:scaleX(1.0335);">dirk/hive/dt=2024-12-06-01-00/symlink.txt</div>
<div class="t" style="left:1287.5px;top:787.3000000000001px;font-size:14.2px;line-height:14.2px;font-weight:400;color:#434f5b;transform:scaleX(1.0121);">personal data protection bill, APPS</div>
<div class="t" style="left:977.6px;top:764.1px;font-size:14.2px;line-height:14.2px;font-weight:400;color:#434f5b;transform:scaleX(1.0201);">Telephone Number</div>
<div class="t" style="left:1132.8px;top:764.1px;font-size:14.2px;line-height:14.2px;font-weight:400;color:#4a90da;transform:scaleX(1.0185);">Telephone Number</div>
<div class="t" style="left:1651.6px;top:764.1px;font-size:14.2px;line-height:14.2px;font-weight:400;color:#434f5b;transform:scaleX(0.9632);">2025-06-17 09:28:58</div>
<div style="position:absolute;left:331px;top:818px;width:1520px;height:1px;background:#e6e9ec;"></div>
<div style="position:absolute;left:349px;top:858px;width:17px;height:17px;background:#fff;border:1px solid #d1d6dc;border-radius:2px;box-sizing:border-box;"></div>
<svg style="position:absolute;left:393px;top:860px;" width="18" height="14" viewBox="0 0 18 14"><g fill="none" stroke="#2e83d4" stroke-width="2"><path d="M1 7 C4.5 1.2 13.5 1.2 17 7 C13.5 12.8 4.5 12.8 1 7 Z"/><circle cx="9" cy="7" r="2.6"/></g></svg>
<div class="t" style="left:436.8px;top:860.3px;font-size:14.2px;line-height:14.2px;font-weight:400;color:#434f5b;transform:scaleX(1.0153);">&lt;all file&gt;</div>
<div class="t" style="left:592.1px;top:837.3px;font-size:14.2px;line-height:14.2px;font-weight:400;color:#434f5b;transform:scaleX(1.0678);">/inventorydirkfake/inventorydirkfake2.0/prod/dirk/0892</div>
<div class="t" style="left:1287.5px;top:836.7px;font-size:14.2px;line-height:14.2px;font-weight:400;color:#434f5b;transform:scaleX(0.9219);">HIPAA, GDPR, ISO27001, KVKK, CCPA, APPI, Privacy</div>
<div class="t" style="left:592.1px;top:860.5999999999999px;font-size:14.2px;line-height:14.2px;font-weight:400;color:#434f5b;transform:scaleX(1.0475);">04452029/fnma-prod-dirk/inventory2.0-fnma-prod-</div>
<div class="t" style="left:1287.5px;top:860.0px;font-size:14.2px;line-height:14.2px;font-weight:400;color:#434f5b;transform:scaleX(0.9634);">Act NZ, LGPD, Nevada privacy law, PIPEDA, Digital</div>
<div class="t" style="left:592.1px;top:883.9px;font-size:14.2px;line-height:14.2px;font-weight:400;color:#434f5b;transform:scaleX(1.0335);">dirk/hive/dt=2024-12-06-01-00/symlink.txt</div>
<div class="t" style="left:1287.5px;top:883.3000000000001px;font-size:14.2px;line-height:14.2px;font-weight:400;color:#434f5b;transform:scaleX(1.0121);">personal data protection bill, APPS</div>
<div class="t" style="left:977.6px;top:860.1px;font-size:14.2px;line-height:14.2px;font-weight:400;color:#434f5b;transform:scaleX(1.0201);">Telephone Number</div>
<div class="t" style="left:1132.8px;top:860.1px;font-size:14.2px;line-height:14.2px;font-weight:400;color:#4a90da;transform:scaleX(1.0185);">Telephone Number</div>
<div class="t" style="left:1651.6px;top:860.1px;font-size:14.2px;line-height:14.2px;font-weight:400;color:#434f5b;transform:scaleX(0.9632);">2025-06-17 09:30:12</div>
</body></html>
